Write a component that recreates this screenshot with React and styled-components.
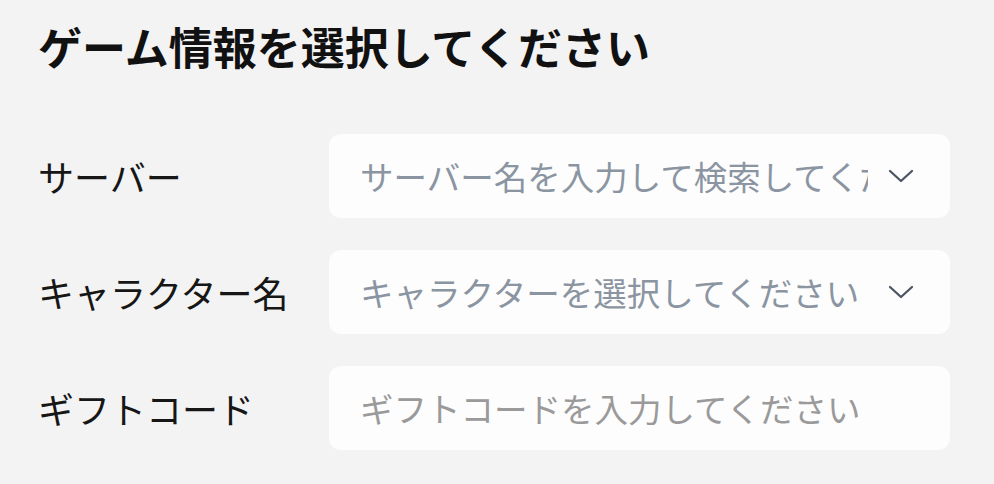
import React from "react";
import styled, { createGlobalStyle } from "styled-components";

const GlobalStyle = createGlobalStyle`
  html, body {
    margin: 0;
    padding: 0;
    background: #f3f3f3;
  }
  body {
    font-family: "Noto Sans CJK JP", "Noto Sans", sans-serif;
  }
  * { box-sizing: border-box; }
`;

const Page = styled.div`
  width: 994px;
  min-height: 484px;
  padding: 24px 44px 0 38px;
  background: #f3f3f3;
`;

const Title = styled.h1`
  margin: 0;
  font-size: 44px;
  line-height: 44px;
  font-weight: 700;
  color: #111111;
  letter-spacing: 0;
  white-space: nowrap;
`;

const Form = styled.div`
  margin-top: 66px;
  display: grid;
  gap: 32px;
`;

const Row = styled.div`
  display: grid;
  grid-template-columns: 291px 621px;
  align-items: center;
`;

const Label = styled.label`
  font-size: 36px;
  line-height: 40px;
  font-weight: 400;
  color: #161616;
  white-space: nowrap;
`;

const Field = styled.div`
  height: 84px;
  background: #fdfdfd;
  border-radius: 12px;
  display: flex;
  align-items: center;
  padding: 0 36px 0 31px;
  gap: 20px;
`;

const FieldInput = styled.input`
  flex: 1;
  min-width: 0;
  border: none;
  outline: none;
  background: transparent;
  padding: 0;
  font-family: "Noto Sans CJK JP", "Noto Sans", sans-serif;
  font-size: 33.5px;
  line-height: 44px;
  color: #333;
  &::placeholder {
    color: ${(p) => (p.$select ? "#8b95a2" : "#9a9a9a")};
    opacity: 1;
  }
`;

const Chevron = styled.svg`
  flex: none;
  width: 26px;
  height: 14px;
`;

const ChevronIcon = () => (
  <Chevron viewBox="0 0 26 14" fill="none">
    <path
      d="M2 2 L13 12 L24 2"
      stroke="#4b5563"
      strokeWidth="2.3"
      strokeLinecap="round"
      strokeLinejoin="round"
    />
  </Chevron>
);

export default function App() {
  return (
    <>
      <GlobalStyle />
      <Page>
        <Title>ゲーム情報を選択してください</Title>
        <Form>
          <Row>
            <Label>サーバー</Label>
            <Field>
              <FieldInput $select placeholder="サーバー名を入力して検索してください" />
              <ChevronIcon />
            </Field>
          </Row>
          <Row>
            <Label>キャラクター名</Label>
            <Field>
              <FieldInput $select readOnly placeholder="キャラクターを選択してください" />
              <ChevronIcon />
            </Field>
          </Row>
          <Row>
            <Label>ギフトコード</Label>
            <Field>
              <FieldInput placeholder="ギフトコードを入力してください" />
            </Field>
          </Row>
        </Form>
      </Page>
    </>
  );
}
